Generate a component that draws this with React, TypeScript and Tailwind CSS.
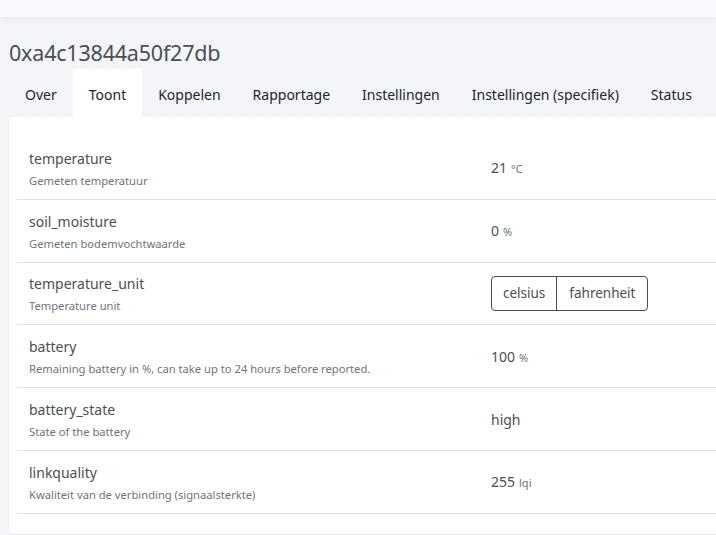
const rows = [
  { name: "temperature", desc: "Gemeten temperatuur", value: "21", unit: "°C" },
  { name: "soil_moisture", desc: "Gemeten bodemvochtwaarde", value: "0", unit: "%" },
  { name: "temperature_unit", desc: "Temperature unit", toggle: ["celsius", "fahrenheit"] },
  { name: "battery", desc: "Remaining battery in %, can take up to 24 hours before reported.", value: "100", unit: "%" },
  { name: "battery_state", desc: "State of the battery", value: "high" },
  { name: "linkquality", desc: "Kwaliteit van de verbinding (signaalsterkte)", value: "255", unit: "lqi" },
];

const tabs = ["Over", "Toont", "Koppelen", "Rapportage", "Instellingen", "Instellingen (specifiek)", "Status"];

export default function App() {
  return (
    <div
      className="min-h-screen w-[716px] h-[535px] overflow-hidden bg-[#f4f5f9] text-[#495057]"
      style={{ fontFamily: '"Noto Sans", "Open Sans", sans-serif' }}
    >
      {/* topbalk */}
      <div className="h-[17px] bg-[#f8f9fc] shadow-[0_2px_8px_rgba(0,0,0,0.06)]" />

      <div className="pl-[9px]">
        <h1 className="mt-[20px] h-[32px] text-[21.5px] leading-[32px] text-[#4a4f55] tracking-[-0.2px]">0xa4c13844a50f27db</h1>

        {/* tabs */}
        <div className="flex h-[48px] items-center text-[14px] text-[#212529] whitespace-nowrap">
          {tabs.map((t) => (
            <div
              key={t}
              className={
                t === "Toont"
                  ? "h-full shrink-0 flex items-center pt-[2px] px-4 bg-white"
                  : "h-full shrink-0 flex items-center pt-[2px] px-4"
              }
            >
              {t}
            </div>
          ))}
        </div>

        {/* kaart */}
        <div className="w-[740px] bg-white rounded-[4px] shadow-[0_1px_2px_rgba(0,0,0,0.08)] pt-5 pb-5 pl-2">
          {rows.map((r) => (
            <div key={r.name} className="flex h-[62.8px] items-center border-b border-[#dee2e6]">
              <div className="w-[474px] pl-3 pt-[2px]">
                <div className="text-[14px] leading-[20px] text-[#4a4f55]">{r.name}</div>
                <div className="mt-[4px] text-[11.2px] leading-[16px] text-[#6c757d]">{r.desc}</div>
              </div>
              <div className="flex items-center">
                {r.toggle ? (
                  <div className="flex h-[35px] rounded-[4px] border border-[#4a4f55] text-[13.5px] text-[#4a4f55]">
                    <div className="flex items-center px-[11px]">{r.toggle[0]}</div>
                    <div className="flex items-center px-[12px] border-l border-[#4a4f55]">{r.toggle[1]}</div>
                  </div>
                ) : (
                  <div className="text-[14px] text-[#4a4f55]">
                    {r.value}
                    {r.unit && <span className="ml-1 text-[11px] text-[#6c757d]">{r.unit}</span>}
                  </div>
                )}
              </div>
            </div>
          ))}
        </div>
      </div>
    </div>
  );
}
